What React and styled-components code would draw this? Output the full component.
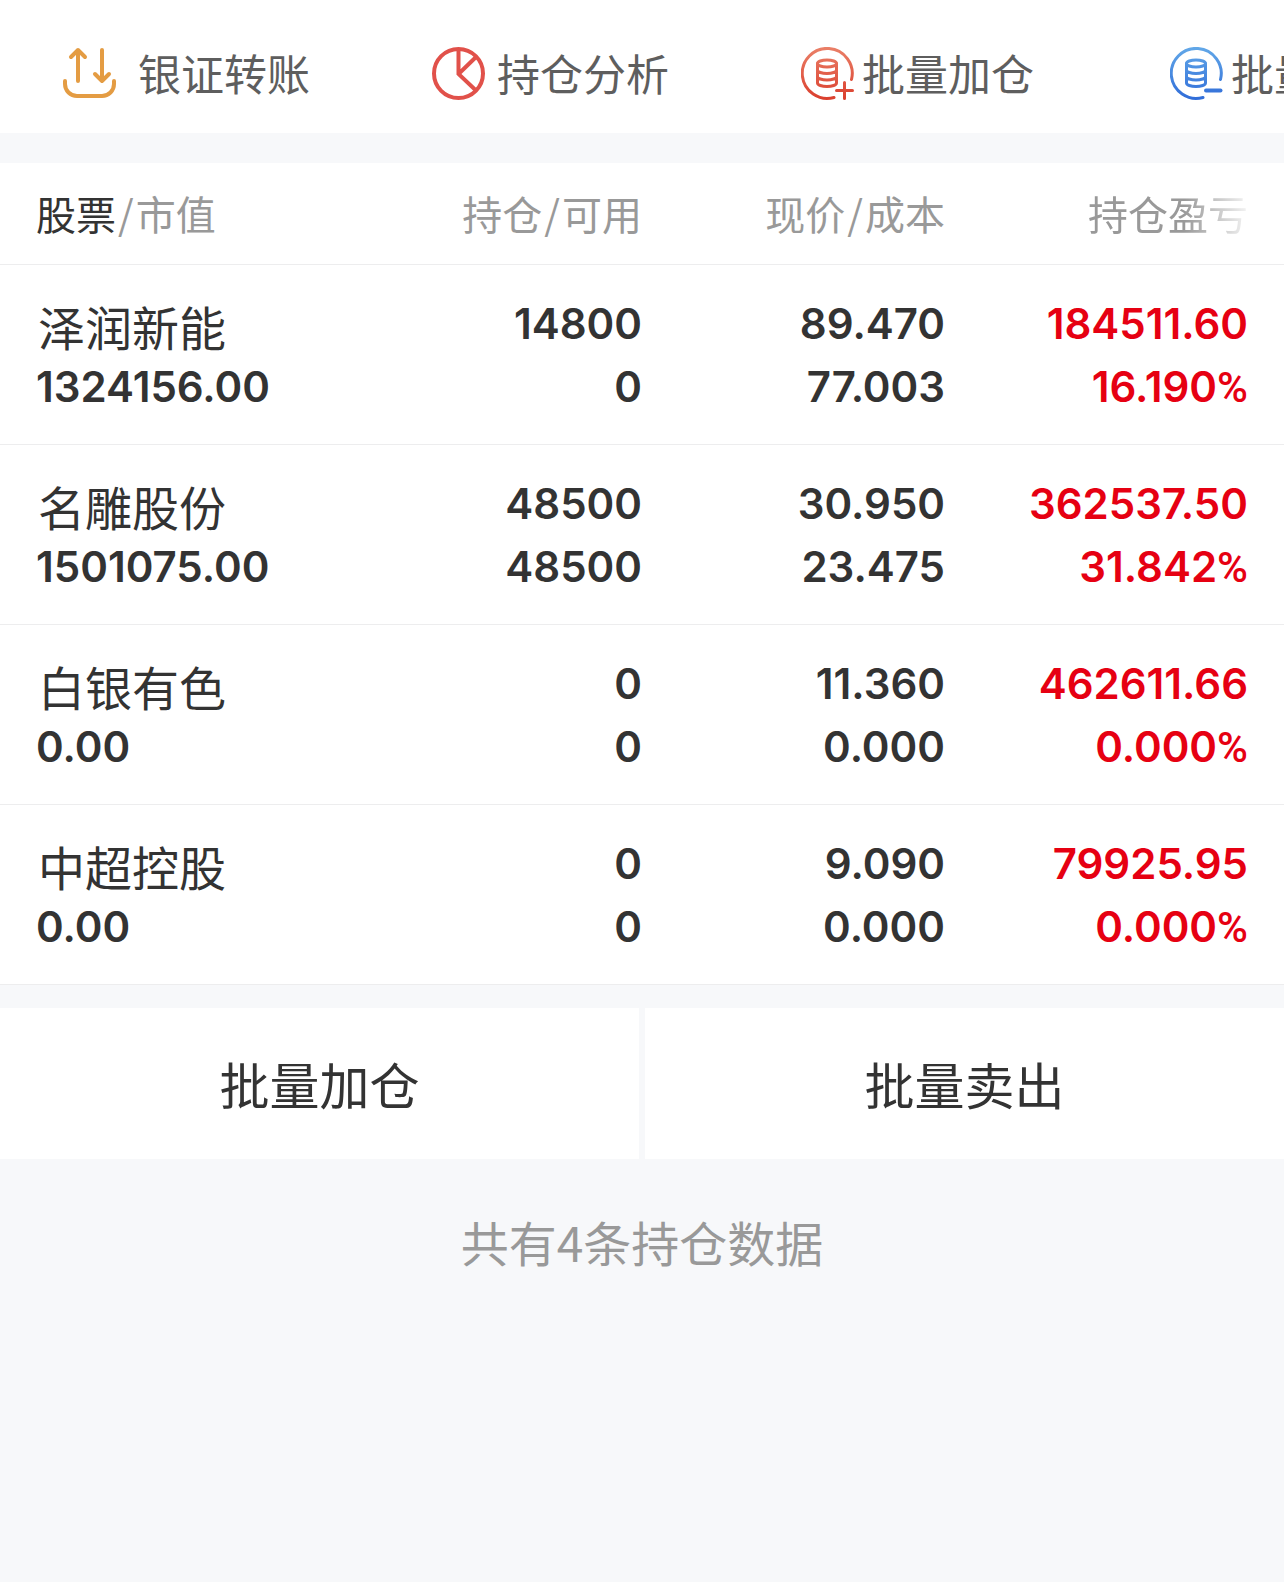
import styled, { createGlobalStyle } from 'styled-components';

const GlobalStyle = createGlobalStyle`
  * {
    box-sizing: border-box;
  }

  body {
    margin: 0;
    background-color: #f7f8fa;
    color: #333333;
    font-family: Inter, 'Noto Sans CJK SC', sans-serif;
  }
`;

const Toolbar = styled.nav`
  display: flex;
  padding: 44px 0 29px 63px;
  overflow: hidden;
  background-color: #ffffff;
`;

const ToolButton = styled.button`
  display: flex;
  flex: 0 0 369px;
  align-items: center;
  gap: ${({ $gap }) => $gap}px;
  padding: 0;
  border: none;
  background: none;
  color: #5e5e5e;
  font-family: 'Noto Sans CJK SC', sans-serif;
  font-size: 43px;
  line-height: 56px;
  white-space: nowrap;
  cursor: pointer;
`;

const ToolLabel = styled.span`
  padding-bottom: 4px;
`;

const Icon = styled.svg`
  flex: none;
  width: 54px;
  height: 54px;
`;

const Table = styled.table`
  display: block;
  margin-top: 30px;
  background-color: #ffffff;
`;

const Head = styled.thead`
  display: block;
`;

const Body = styled.tbody`
  display: block;
`;

const Row = styled.tr`
  display: grid;
  grid-template-columns: repeat(4, 1fr);
  padding: 0 36px;
  border-bottom: 1px solid #ededee;
`;

const HeadCell = styled.th`
  padding: 20px 0 21px;
  color: #999999;
  font-family: 'Noto Sans CJK SC', sans-serif;
  font-size: 40px;
  font-weight: 400;
  line-height: 60px;
  text-align: ${({ $left }) => ($left ? 'left' : 'right')};
  white-space: nowrap;
`;

const Strong = styled.span`
  color: #333333;
`;

const Slash = styled.span`
  padding: 0 2px;
`;

const Fade = styled.span`
  mask-image: linear-gradient(to right, #000000 60%, transparent 105%);
`;

const Cell = styled.td`
  padding: 27px 0 26px;
  color: ${({ $up }) => ($up ? '#e60012' : '#333333')};
  font-size: 42px;
  font-weight: 600;
  line-height: 63px;
  text-align: ${({ $left }) => ($left ? 'left' : 'right')};
  white-space: nowrap;
`;

const Line = styled.div`
  height: 63px;
`;

const StockName = styled(Line)`
  padding-left: 2px;
  font-family: 'Noto Sans CJK SC', sans-serif;
  font-size: 47px;
  font-weight: 400;
  line-height: 67px;
`;

const Percent = styled.span`
  font-family: Roboto, sans-serif;
  font-weight: 500;
`;

const Actions = styled.div`
  display: grid;
  grid-template-columns: 1fr 1fr;
  gap: 6px;
  margin-top: 23px;
`;

const ActionButton = styled.button`
  padding: 39px 0 40px;
  border: none;
  background-color: #ffffff;
  color: #333333;
  font-family: 'Noto Sans CJK SC', sans-serif;
  font-size: 50px;
  line-height: 72px;
  cursor: pointer;
`;

const Summary = styled.p`
  margin: 46px 0;
  color: #999999;
  font-family: 'Noto Sans CJK SC', sans-serif;
  font-size: 48px;
  line-height: 72px;
  text-align: center;
`;

const TransferIcon = () => (
  <Icon viewBox="0 0 54 54" fill="none" stroke="#e49c43" strokeWidth="4" strokeLinecap="round" strokeLinejoin="round">
    <path d="M15 34V3M8 10l7-7 7 7M39 3v31M32 27l7 7 7-7" />
    <path d="M2 34v3a12 12 0 0 0 12 12h25a12 12 0 0 0 12-12v-3" />
  </Icon>
);

const PieIcon = () => (
  <Icon viewBox="0 0 54 54" fill="none" stroke="#e1514a" strokeWidth="4">
    <circle cx="26.500" cy="26.500" r="24.500" />
    <path d="M26.500 2v25L44 43.500M26.500 27L43.500 10.500" />
  </Icon>
);

const CoinsIcon = ({ id, from, to, plus }) => (
  <Icon viewBox="0 0 54 54" fill="none" stroke={`url(#${id})`} strokeWidth="3" strokeLinecap="round">
    <defs>
      <linearGradient id={id} gradientUnits="userSpaceOnUse" x1="0" y1="0" x2="0" y2="54">
        <stop offset="0" stopColor={from} />
        <stop offset="1" stopColor={to} />
      </linearGradient>
    </defs>
    <path d="M50.500 32.500A25 25 0 1 0 33 50.500" />
    <ellipse cx="26" cy="16.500" rx="9.500" ry="3.500" />
    <path d="M16.500 16.500v19.500c0 2 4.500 3.500 9.500 3.500s9.500-1.500 9.500-3.500V16.500M16.500 23c0 2 4.500 3.500 9.500 3.500s9.500-1.500 9.500-3.500M16.500 29.500c0 2 4.500 3.500 9.500 3.500s9.500-1.500 9.500-3.500" />
    {plus ? (
      <path d="M35.500 43.500h16M43.500 35.500v16" />
    ) : (
      <path d="M36 43.500h14.500" strokeWidth="4" />
    )}
  </Icon>
);

const holdings = [
  { name: '泽润新能', value: '1324156.00', held: '14800', usable: '0', price: '89.470', cost: '77.003', profit: '184511.60', rate: '16.190' },
  { name: '名雕股份', value: '1501075.00', held: '48500', usable: '48500', price: '30.950', cost: '23.475', profit: '362537.50', rate: '31.842' },
  { name: '白银有色', value: '0.00', held: '0', usable: '0', price: '11.360', cost: '0.000', profit: '462611.66', rate: '0.000' },
  { name: '中超控股', value: '0.00', held: '0', usable: '0', price: '9.090', cost: '0.000', profit: '79925.95', rate: '0.000' },
];

const App = () => (
  <>
    <GlobalStyle />
    <Toolbar>
      <ToolButton type="button" $gap={21}>
        <TransferIcon />
        <ToolLabel>银证转账</ToolLabel>
      </ToolButton>
      <ToolButton type="button" $gap={11}>
        <PieIcon />
        <ToolLabel>持仓分析</ToolLabel>
      </ToolButton>
      <ToolButton type="button" $gap={7}>
        <CoinsIcon id="coins-add" from="#ea8068" to="#da3d2c" plus />
        <ToolLabel>批量加仓</ToolLabel>
      </ToolButton>
      <ToolButton type="button" $gap={7}>
        <CoinsIcon id="coins-sell" from="#62a8e8" to="#2f6bd8" />
        <ToolLabel>批量卖出</ToolLabel>
      </ToolButton>
    </Toolbar>

    <Table>
      <Head>
        <Row>
          <HeadCell $left scope="col">
            <Strong>股票</Strong>
            <Slash>/</Slash>市值
          </HeadCell>
          <HeadCell scope="col">
            持仓<Slash>/</Slash>可用
          </HeadCell>
          <HeadCell scope="col">
            现价<Slash>/</Slash>成本
          </HeadCell>
          <HeadCell scope="col">
            <Fade>持仓盈亏</Fade>
          </HeadCell>
        </Row>
      </Head>
      <Body>
        {holdings.map(item => (
          <Row key={item.name}>
            <Cell $left>
              <StockName>{item.name}</StockName>
              <Line>{item.value}</Line>
            </Cell>
            <Cell>
              <Line>{item.held}</Line>
              <Line>{item.usable}</Line>
            </Cell>
            <Cell>
              <Line>{item.price}</Line>
              <Line>{item.cost}</Line>
            </Cell>
            <Cell $up>
              <Line>{item.profit}</Line>
              <Line>
                {item.rate}
                <Percent>%</Percent>
              </Line>
            </Cell>
          </Row>
        ))}
      </Body>
    </Table>

    <Actions>
      <ActionButton type="button">批量加仓</ActionButton>
      <ActionButton type="button">批量卖出</ActionButton>
    </Actions>

    <Summary>共有{holdings.length}条持仓数据</Summary>
  </>
);

export default App;
